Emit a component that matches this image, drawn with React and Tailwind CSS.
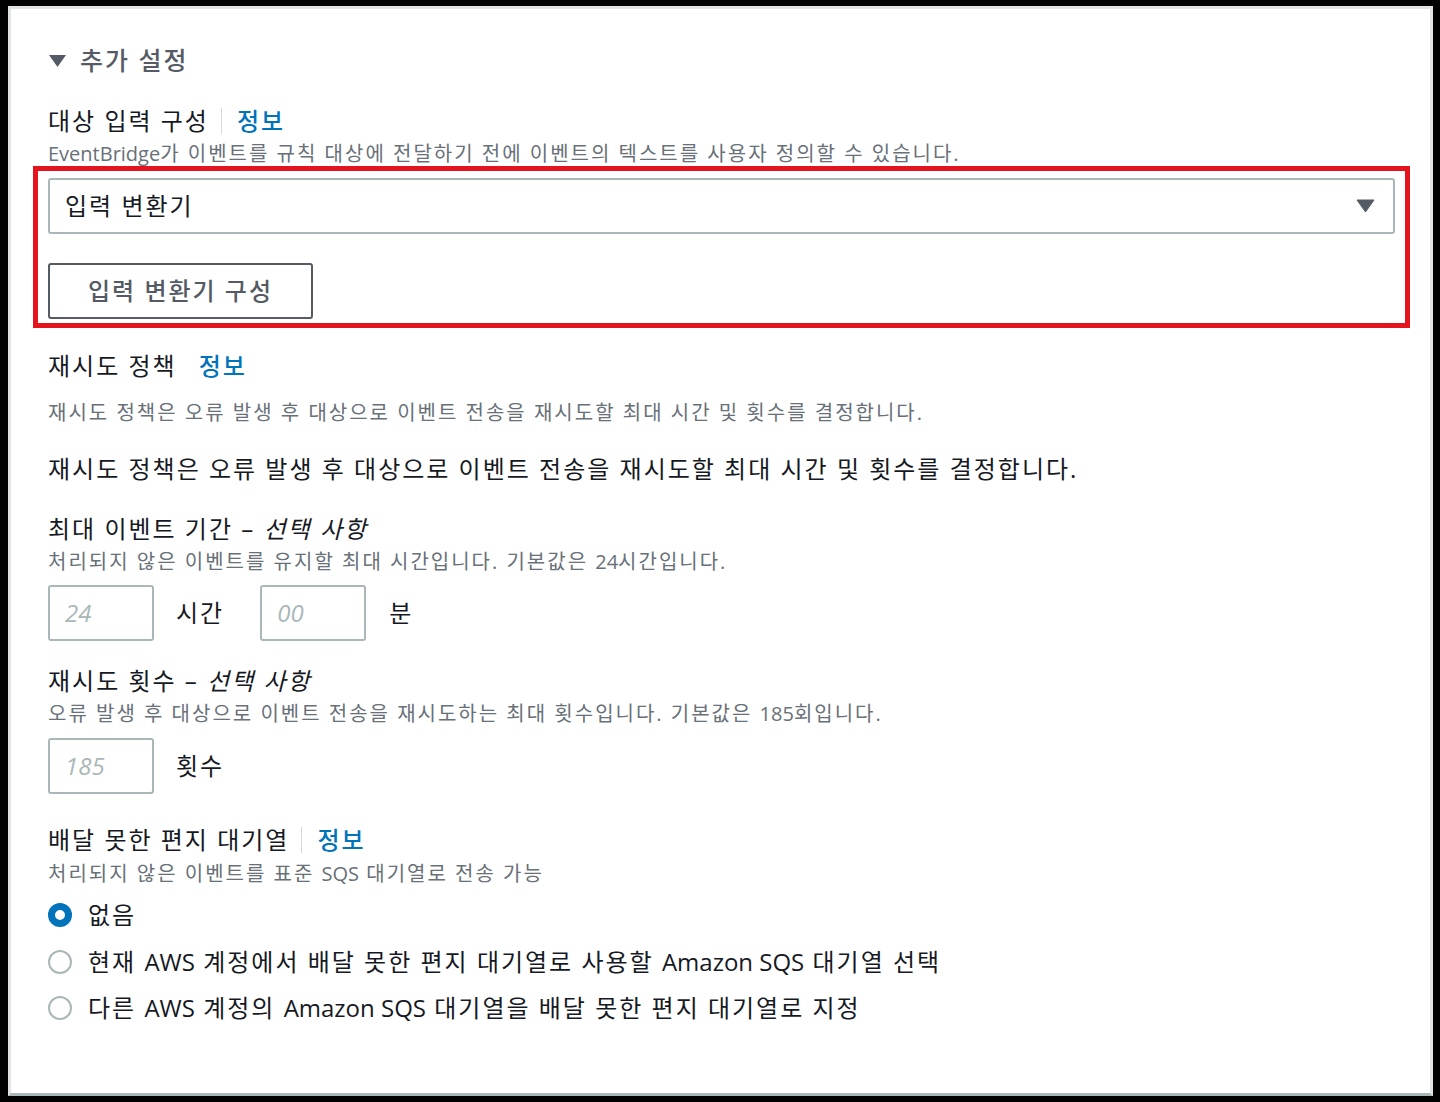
import React from 'react';

const font = { fontFamily: '"Open Sans", "Noto Sans CJK KR", sans-serif' };

function Info() {
  return <span className="text-[#0073bb] font-medium">정보</span>;
}

// Latin words keep their natural spacing
function L({ children }) {
  return <span className="tracking-normal">{children}</span>;
}

function Radio({ checked, children, className }) {
  return (
    <div className={`flex items-center h-[30px] ${className}`}>
      {checked ? (
        <span className="w-[24px] h-[24px] rounded-full border-[7px] border-[#0073bb] bg-white shrink-0" />
      ) : (
        <span className="w-[24px] h-[24px] rounded-full border-2 border-[#aab7b8] bg-white shrink-0" />
      )}
      <span className="ml-[16px] text-[24px] leading-[30px] text-[#16191f]">{children}</span>
    </div>
  );
}

export default function App() {
  return (
    <div className="bg-black w-[1440px] h-[1102px] pt-[6px] pl-[8px] pr-[7px] pb-[6px] tracking-[2px]" style={font}>
      <div className="relative h-full bg-white border-[3px] border-[#dfe3e3] border-b-[#aab7b8] pl-[37px] pr-[35px] pt-[36px]">
        {/* Header */}
        <div className="flex items-center h-[30px]">
          <svg width="19" height="14" viewBox="0 0 19 14" className="mt-[1px]">
            <path d="M1 1 L18 1 L9.5 13 Z" fill="#545b64" />
          </svg>
          <span className="ml-[13px] text-[25px] leading-[30px] font-medium text-[#545b64]">추가 설정</span>
        </div>

        {/* Target input */}
        <div className="flex items-center h-[30px] mt-[31px] text-[24px] leading-[30px] text-[#16191f]">
          <span>대상 입력 구성</span>
          <span className="ml-[12px] mr-[15px] w-px h-[26px] bg-[#d5dbdb]" />
          <Info />
        </div>
        <div className="h-[26px] mt-[5px] text-[20px] leading-[26px] text-[#687078]">
          <L>EventBridge</L>가 이벤트를 규칙 대상에 전달하기 전에 이벤트의 텍스트를 사용자 정의할 수 있습니다.
        </div>
        <div className="mt-[11px] h-[56px] flex items-center justify-between border-2 border-[#aab7b8] rounded-[3px] pl-[15px] pr-[18px]">
          <span className="text-[24px] text-[#16191f]">입력 변환기</span>
          <svg width="19" height="14" viewBox="0 0 19 14">
            <path d="M1 1 L18 1 L9.5 13 Z" fill="#545b64" stroke="#545b64" strokeLinejoin="round" />
          </svg>
        </div>
        <button className="mt-[29px] h-[56px] w-[265px] border-2 border-[#545b64] rounded-[3px] text-[24px] font-medium text-[#545b64] bg-white tracking-[2px]">
          입력 변환기 구성
        </button>

        {/* Retry policy */}
        <div className="flex items-center h-[30px] mt-[32px] text-[24px] leading-[30px] text-[#16191f]">
          <span>재시도 정책</span>
          <span className="ml-[22px]"><Info /></span>
        </div>
        <div className="h-[26px] mt-[19px] text-[20px] leading-[26px] text-[#687078]">
          재시도 정책은 오류 발생 후 대상으로 이벤트 전송을 재시도할 최대 시간 및 횟수를 결정합니다.
        </div>
        <div className="h-[30px] mt-[28px] text-[24px] leading-[30px] text-[#16191f]">
          재시도 정책은 오류 발생 후 대상으로 이벤트 전송을 재시도할 최대 시간 및 횟수를 결정합니다.
        </div>

        {/* Max event age */}
        <div className="h-[30px] mt-[30px] text-[24px] leading-[30px] text-[#16191f]">
          최대 이벤트 기간 – <i>선택 사항</i>
        </div>
        <div className="h-[26px] mt-[5px] text-[20px] leading-[26px] text-[#687078]">
          처리되지 않은 이벤트를 유지할 최대 시간입니다. 기본값은 <L>24</L>시간입니다.
        </div>
        <div className="flex items-center mt-[10px]">
          <div className="w-[106px] h-[56px] border-2 border-[#aab7b8] rounded-[3px] flex items-center pl-[15px] text-[24px] italic tracking-normal text-[#aab7b8]">24</div>
          <span className="ml-[22px] text-[24px] text-[#16191f]">시간</span>
          <div className="ml-[36px] w-[106px] h-[56px] border-2 border-[#aab7b8] rounded-[3px] flex items-center pl-[15px] text-[24px] italic tracking-normal text-[#aab7b8]">00</div>
          <span className="ml-[23px] text-[24px] text-[#16191f]">분</span>
        </div>

        {/* Retry attempts */}
        <div className="h-[30px] mt-[25px] text-[24px] leading-[30px] text-[#16191f]">
          재시도 횟수 – <i>선택 사항</i>
        </div>
        <div className="h-[26px] mt-[5px] text-[20px] leading-[26px] text-[#687078]">
          오류 발생 후 대상으로 이벤트 전송을 재시도하는 최대 횟수입니다. 기본값은 <L>185</L>회입니다.
        </div>
        <div className="flex items-center mt-[11px]">
          <div className="w-[106px] h-[56px] border-2 border-[#aab7b8] rounded-[3px] flex items-center pl-[15px] text-[24px] italic tracking-normal text-[#aab7b8]">185</div>
          <span className="ml-[22px] text-[24px] text-[#16191f]">횟수</span>
        </div>

        {/* Dead-letter queue */}
        <div className="flex items-center h-[30px] mt-[31px] text-[24px] leading-[30px] text-[#16191f]">
          <span>배달 못한 편지 대기열</span>
          <span className="ml-[12px] mr-[15px] w-px h-[26px] bg-[#d5dbdb]" />
          <Info />
        </div>
        <div className="h-[26px] mt-[6px] text-[20px] leading-[26px] text-[#687078]">
          처리되지 않은 이벤트를 표준 <L>SQS</L> 대기열로 전송 가능
        </div>
        <Radio checked className="mt-[13px]">없음</Radio>
        <Radio className="mt-[17px]">
          현재 <L>AWS</L> 계정에서 배달 못한 편지 대기열로 사용할 <L>Amazon SQS</L> 대기열 선택
        </Radio>
        <Radio className="mt-[16px]">
          다른 <L>AWS</L> 계정의 <L>Amazon SQS</L> 대기열을 배달 못한 편지 대기열로 지정
        </Radio>

        {/* Highlight overlay */}
        <div className="absolute left-[22px] top-[157px] w-[1377px] h-[162px] border-[5px] border-[#e3141d] pointer-events-none" />
      </div>
    </div>
  );
}
